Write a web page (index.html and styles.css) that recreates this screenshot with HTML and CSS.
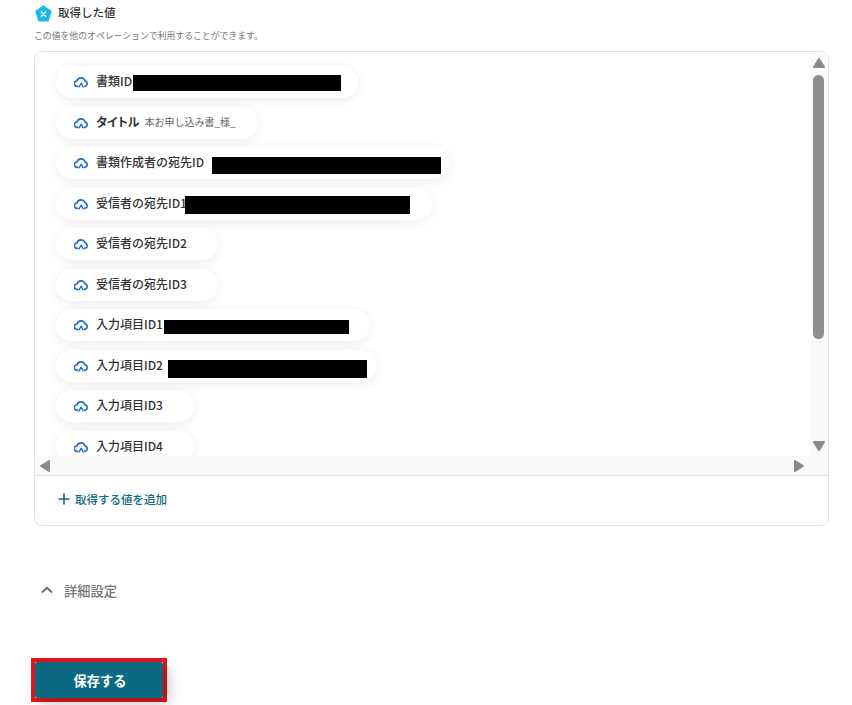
FILE: index.html
```html
<!DOCTYPE html>
<html lang="ja">
<head>
<meta charset="utf-8">
<title>取得した値</title>
<link rel="stylesheet" href="styles.css">
</head>
<body>
<main class="page">
  <div class="heading">
    <svg class="badge" width="17" height="17" viewBox="0 0 17 17"><path d="M8.5 1 16 6.3 13.2 15.2a1 1 0 0 1-1 .7H4.8a1 1 0 0 1-1-.7L1 6.3Z" fill="#1cb8ea" stroke="#1cb8ea" stroke-width="1.4" stroke-linejoin="round"/><path d="M6.4 7 10.6 11.2M10.6 7 6.4 11.2" stroke="#fff" stroke-width="1.4" stroke-linecap="round"/></svg>
    <h2 class="title">取得した値</h2>
  </div>
  <p class="desc">この値を他のオペレーションで利用することができます。</p>

  <section class="card">
    <div class="viewport">
      <div class="scroller">
        <div class="list">
          <div class="chip w302"><svg class="cloud" viewBox="0 0 14 14"><use href="#c"/></svg><span class="name">書類ID</span><span class="red r1"></span></div>
          <div class="chip w202"><svg class="cloud" viewBox="0 0 14 14"><use href="#c"/></svg><span class="name strong">タイトル</span><span class="val">本お申し込み書_様_</span></div>
          <div class="chip w394"><svg class="cloud" viewBox="0 0 14 14"><use href="#c"/></svg><span class="name">書類作成者の宛先ID</span><span class="red r2"></span></div>
          <div class="chip w376"><svg class="cloud" viewBox="0 0 14 14"><use href="#c"/></svg><span class="name">受信者の宛先ID1</span><span class="red r3"></span></div>
          <div class="chip w162"><svg class="cloud" viewBox="0 0 14 14"><use href="#c"/></svg><span class="name">受信者の宛先ID2</span></div>
          <div class="chip w162"><svg class="cloud" viewBox="0 0 14 14"><use href="#c"/></svg><span class="name">受信者の宛先ID3</span></div>
          <div class="chip w314"><svg class="cloud" viewBox="0 0 14 14"><use href="#c"/></svg><span class="name">入力項目ID1</span><span class="red r4"></span></div>
          <div class="chip w320"><svg class="cloud" viewBox="0 0 14 14"><use href="#c"/></svg><span class="name">入力項目ID2</span><span class="red r5"></span></div>
          <div class="chip w138"><svg class="cloud" viewBox="0 0 14 14"><use href="#c"/></svg><span class="name">入力項目ID3</span></div>
          <div class="chip w138"><svg class="cloud" viewBox="0 0 14 14"><use href="#c"/></svg><span class="name">入力項目ID4</span></div>
        </div>
        <div class="hbar">
          <svg class="arrow" width="12" height="14" viewBox="0 0 12 14"><path d="M10 2 2 7l8 5Z" fill="#8a8a8a" stroke="#8a8a8a" stroke-width="2" stroke-linejoin="round"/></svg>
          <svg class="arrow" width="12" height="14" viewBox="0 0 12 14"><path d="M2 2l8 5-8 5Z" fill="#8a8a8a" stroke="#8a8a8a" stroke-width="2" stroke-linejoin="round"/></svg>
        </div>
      </div>
      <div class="vbar">
        <svg class="arrow" width="14" height="12" viewBox="0 0 14 12"><path d="M7 2 2 10h10Z" fill="#8a8a8a" stroke="#8a8a8a" stroke-width="2" stroke-linejoin="round"/></svg>
        <span class="thumb"></span>
        <svg class="arrow down" width="14" height="12" viewBox="0 0 14 12"><path d="M2 2h10L7 10Z" fill="#8a8a8a" stroke="#8a8a8a" stroke-width="2" stroke-linejoin="round"/></svg>
      </div>
    </div>
    <div class="add">
      <svg class="plus" width="12" height="12" viewBox="0 0 12 12"><path d="M6 .5v11M.5 6h11" stroke="#0b6a82" stroke-width="1.6"/></svg>
      <span>取得する値を追加</span>
    </div>
  </section>

  <div class="detail">
    <svg class="chev" width="12" height="8" viewBox="0 0 12 8"><path d="M1 6.5 6 1.8l5 4.7" fill="none" stroke="#666" stroke-width="1.8"/></svg>
    <span>詳細設定</span>
  </div>

  <div class="save-wrap">
    <button class="save">保存する</button>
  </div>
</main>
<svg class="defs" width="0" height="0"><defs><g id="c"><path d="M3.6 11.4H3.2A2.7 2.7 0 0 1 2.9 6 4.2 4.2 0 0 1 11 5.9 2.8 2.8 0 0 1 10.9 11.4h-.5" fill="none" stroke="#1d6fd1" stroke-width="1.6" stroke-linecap="round"/><path d="M5 11.8 7.3 8.2 9 11.8" fill="none" stroke="#1d6fd1" stroke-width="1.4" stroke-linecap="round" stroke-linejoin="round"/></g></defs></svg>
</body>
</html>
```
FILE: styles.css
```css
* { box-sizing: border-box; }
html, body { margin: 0; padding: 0; }
body {
  width: 852px;
  height: 705px;
  overflow: hidden;
  background: #fff;
  font-family: "Noto Sans CJK JP", "Noto Sans", sans-serif;
  color: #333;
}
.page { padding: 4px 23px 0 34px; }
.heading { display: flex; align-items: center; gap: 6px; height: 18px; padding-left: 1px; }
.badge { flex: none; }
.title { margin: 0 0 2px; font-size: 11.5px; font-weight: 500; line-height: 16px; color: #333; }
.desc { margin: 7px 0 0; font-size: 8.85px; line-height: 14px; color: #777; height: 14px; white-space: nowrap; }
.card {
  margin-top: 8px;
  width: 795px;
  height: 475px;
  border: 1px solid #e2e2e2;
  border-radius: 8px;
  overflow: hidden;
  background: #fff;
}
.viewport { display: flex; height: 423px; }
.scroller { flex: none; width: 776px; }
.list { height: 404px; overflow: hidden; padding: 14px 0 0 21px; }
.chip {
  display: flex;
  align-items: center;
  height: 32px;
  margin-bottom: 8.5px;
  border-radius: 16px;
  background: #fff;
  padding-left: 18px;
  box-shadow: 0 2px 12px rgba(0,0,0,.08);
  white-space: nowrap;
}
.w302 { width: 302px; } .w202 { width: 202px; } .w394 { width: 394px; }
.w376 { width: 376px; } .w162 { width: 162px; } .w314 { width: 314px; }
.w320 { width: 320px; } .w138 { width: 138px; }
.cloud { width: 14px; height: 14px; flex: none; margin-right: 8px; }
.name { font-size: 12px; font-weight: 500; color: #333; line-height: 16px; margin-top: -2px; }
.name.strong { font-weight: 700; font-feature-settings: "palt"; }
.val { margin-left: 5px; font-size: 10px; color: #666; margin-top: -2px; }
.red { display: block; background: #000; flex: none; }
.r1 { width: 208px; height: 16px; margin-left: 1px; margin-top: 2px; }
.r2 { width: 229px; height: 17px; margin-left: 8px; margin-top: 5px; }
.r3 { width: 225px; height: 18px; margin-left: -2px; margin-top: 3px; }
.r4 { width: 185px; height: 14px; margin-left: 1px; margin-top: 4px; }
.r5 { width: 199px; height: 18px; margin-left: 5px; margin-top: 7px; }
.hbar { display: flex; justify-content: space-between; align-items: center; height: 19px; background: #fafafa; padding: 0 6px 0 4px; }
.vbar { flex: none; width: 18px; height: 423px; background: #fafafa; display: flex; flex-direction: column; align-items: center; padding: 5px 3px 0 0; }
.arrow { display: block; flex: none; }
.down { margin-top: 101px; }
.thumb { display: block; width: 11px; height: 264px; margin-top: 6px; border-radius: 6px; background: #8f8f8f; flex: none; }
.add {
  display: flex; align-items: center; gap: 5px;
  height: 50px;
  border-top: 1px solid #e2e2e2;
  padding: 0 0 3px 23px;
  font-size: 11.5px; font-weight: 500; color: #0b6a82;
}
.detail { display: flex; align-items: center; gap: 11px; margin-top: 54px; height: 20px; padding-left: 7px; font-size: 13.25px; font-weight: 500; color: #777; }
.save-wrap { margin-top: 58px; margin-left: -3px; width: 136px; height: 44px; border: 4px solid #e8141c; }
.save {
  display: block; width: 128px; height: 36px; border: 0; border-radius: 2px;
  background: #0b6a82; color: #fff;
  font-family: inherit; font-size: 13.25px; font-weight: 700; padding: 0 0 0 2px;
  box-shadow: 6px 6px 14px rgba(0,0,0,.22);
}
.defs { position: absolute; }
```
